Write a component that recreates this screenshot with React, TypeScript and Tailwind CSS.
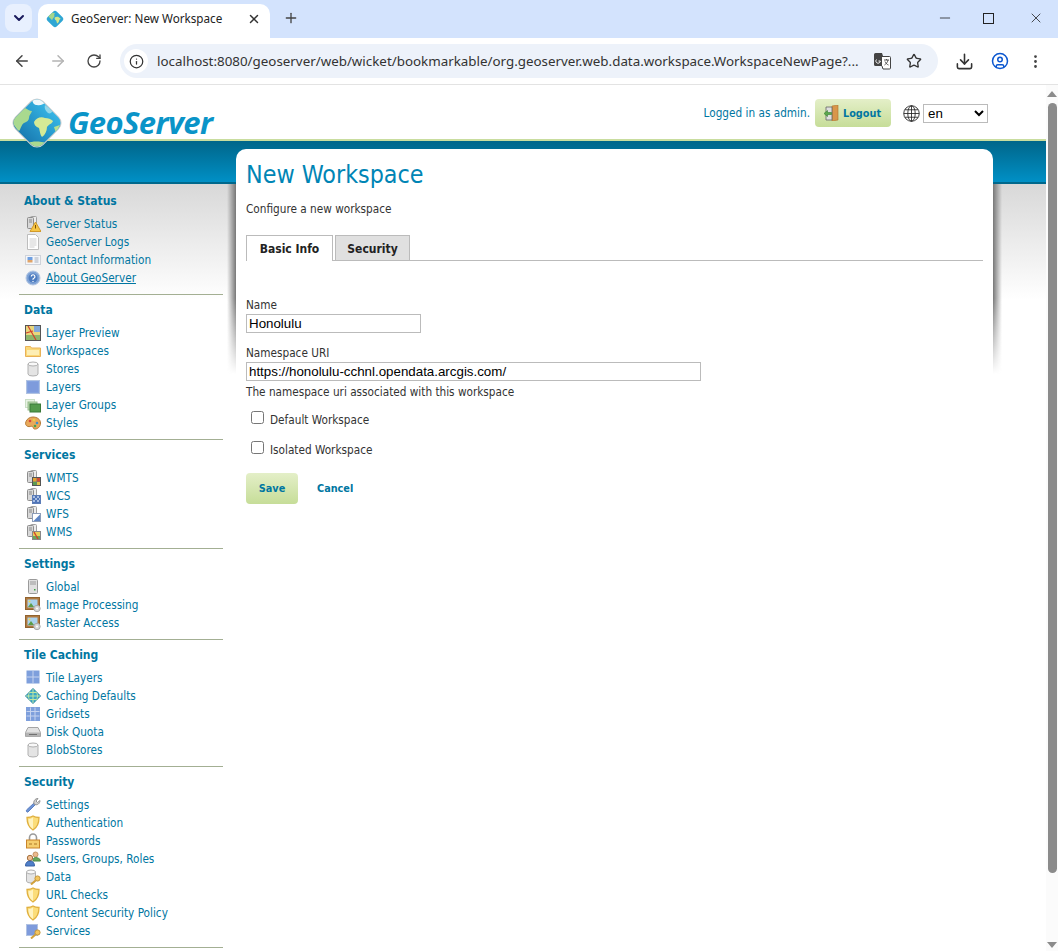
import { ArrowLeft, ArrowRight, ChevronDown, Download, Info, Minus, MoreVertical, Plus, RotateCw, Star, UserCircle, X } from 'lucide-react';

const sections = [
    {
        title: 'About & Status',
        items: [
            ['Server Status', 'status'],
            ['GeoServer Logs', 'doc'],
            ['Contact Information', 'card'],
            ['About GeoServer', 'help'],
        ],
    },
    {
        title: 'Data',
        items: [
            ['Layer Preview', 'preview'],
            ['Workspaces', 'folder'],
            ['Stores', 'db'],
            ['Layers', 'layer'],
            ['Layer Groups', 'groups'],
            ['Styles', 'palette'],
        ],
    },
    {
        title: 'Services',
        items: [
            ['WMTS', 'wmts'],
            ['WCS', 'wcs'],
            ['WFS', 'wfs'],
            ['WMS', 'wms'],
        ],
    },
    {
        title: 'Settings',
        items: [
            ['Global', 'server'],
            ['Image Processing', 'picture'],
            ['Raster Access', 'picture'],
        ],
    },
    {
        title: 'Tile Caching',
        items: [
            ['Tile Layers', 'tiles'],
            ['Caching Defaults', 'globe'],
            ['Gridsets', 'grid'],
            ['Disk Quota', 'disk'],
            ['BlobStores', 'db'],
        ],
    },
    {
        title: 'Security',
        items: [
            ['Settings', 'wrench'],
            ['Authentication', 'shield'],
            ['Passwords', 'lock'],
            ['Users, Groups, Roles', 'users'],
            ['Data', 'dbkey'],
            ['URL Checks', 'shield'],
            ['Content Security Policy', 'shield'],
            ['Services', 'layerkey'],
        ],
    },
];

function ServerBase() {
    return (
        <>
            <rect x="5.5" y="0.5" width="6" height="10" rx="1" fill="#ececec" stroke="#a0a0a0" />
            <rect x="2.5" y="1.5" width="6" height="11" rx="1" fill="#d8d8d8" stroke="#8d8d8d" />
            <path d="M4 4h3M4 6h3" stroke="#888" />
        </>
    );
}

function Key() {
    return (
        <>
            <circle cx="12.5" cy="9.5" r="2.6" fill="#f3c55e" stroke="#c4963a" />
            <path d="M10.5 11.5L6 15.5" stroke="#d3a23a" strokeWidth="2" />
        </>
    );
}

function MenuIcon({ name }: { name: string }) {
    let body = null;
    switch (name) {
        case 'status':
            body = (
                <>
                    <ServerBase />
                    <path d="M10.5 6L16 15.5H5z" fill="#f6c544" stroke="#d19a2a" />
                    <path d="M10.5 9v3.5" stroke="#7a4d00" />
                </>
            );
            break;
        case 'doc':
            body = (
                <>
                    <path d="M2.5.5h8l3 3v12h-11z" fill="#fff" stroke="#bdbdbd" />
                    <path d="M4.5 5h7M4.5 7h7M4.500 9h7M4.500 11h7M4.500 13h5" stroke="#cfcfcf" />
                </>
            );
            break;
        case 'card':
            body = (
                <>
                    <rect x="0.5" y="3.5" width="15" height="9" fill="#f4f6fa" stroke="#cfd3da" />
                    <rect x="2.5" y="5" width="5" height="3" fill="#6f9fe0" />
                    <rect x="2.5" y="8" width="5" height="2.5" fill="#e0a468" />
                    <path d="M9.500 6h4M9.500 8h4M9.500 10h4" stroke="#a7afbc" />
                </>
            );
            break;
        case 'help':
            body = (
                <>
                    <circle cx="8" cy="8" r="7" fill="#7fa3d6" stroke="#b5c8e4" />
                    <circle cx="8" cy="8" r="4.500" fill="#4f7dc0" />
                    <path d="M6.300 6.500a1.800 1.800 0 113 1.400L8 9v.8M8 11v1" stroke="#fff" strokeWidth="1.200" fill="none" />
                </>
            );
            break;
        case 'preview':
            body = (
                <>
                    <rect x="0.500" y="0.500" width="15" height="15" fill="#e8d77c" stroke="#555" />
                    <path d="M1 10h14v5H1z" fill="#8db56c" />
                    <path d="M9 1h6v6H9z" fill="#83a8d8" />
                    <path d="M3 1l8 14M1 8l7-2" stroke="#d2402c" strokeWidth="1.200" />
                </>
            );
            break;
        case 'folder':
            body = (
                <>
                    <path d="M.5 3.500h5l1 1.500h9v8.500H.5z" fill="#fbd878" stroke="#e8b158" />
                    <path d="M2 7h12v5H2z" fill="#fdeeb5" />
                </>
            );
            break;
        case 'db':
            body = (
                <>
                    <path d="M3 3v10a5 2 0 0010 0V3z" fill="#e4e4e4" stroke="#b0b0b0" />
                    <ellipse cx="8" cy="3" rx="5" ry="2" fill="#f8f8f8" stroke="#b0b0b0" />
                </>
            );
            break;
        case 'layer':
            body = (
                <>
                    <rect x="1.500" y="1.500" width="13" height="13" fill="#85a3e0" stroke="#b0c2e2" />
                    <rect x="3" y="3" width="10" height="10" fill="#7e9bdc" />
                </>
            );
            break;
        case 'groups':
            body = (
                <>
                    <rect x="0.500" y="2.500" width="9" height="8" fill="#e8f3e3" stroke="#cbdfc6" />
                    <rect x="3" y="5" width="9" height="8" fill="#b5d4aa" stroke="#98bb8c" />
                    <rect x="5" y="7" width="10.500" height="8" fill="#539a4c" stroke="#3a7a38" />
                </>
            );
            break;
        case 'palette':
            body = (
                <>
                    <path d="M8 2c4 0 7.500 2.400 7.500 6S12.500 14.500 9.500 14c-1.600-.3-1-2-2.200-2.600-1.400-.6-2.600.8-4.600 0C.8 10.600 0 9 1 6.500 2 3.800 4.800 2 8 2z" fill="#e9a95a" stroke="#b57b38" />
                    <circle cx="5" cy="6" r="1.300" fill="#d9453a" />
                    <circle cx="9" cy="5" r="1.300" fill="#e8d04a" />
                    <circle cx="12" cy="8" r="1.300" fill="#3c8fd0" />
                    <circle cx="10" cy="11" r="1.300" fill="#4aa34d" />
                </>
            );
            break;
        case 'wmts':
            body = (
                <>
                    <ServerBase />
                    <rect x="7.500" y="7.500" width="8" height="8" fill="#777" stroke="#555" />
                    <path d="M8 8h3.500v3.500H8z" fill="#e3a431" />
                    <path d="M12 8h3v3.500h-3z" fill="#d14f35" />
                    <path d="M8 12h3.500v3H8z" fill="#5a9d50" />
                    <path d="M12 12h3v3h-3z" fill="#dfc447" />
                </>
            );
            break;
        case 'wcs':
            body = (
                <>
                    <ServerBase />
                    <rect x="7.500" y="7.500" width="8" height="8" fill="#4f74b8" stroke="#5c7db8" />
                    <path d="M8 8h2v2H8zM12 8h2v2h-2zM10 10h2v2h-2zM14 10h1v2h-1zM8 12h2v2H8zM12 12h2v2h-2z" fill="#a7bde2" />
                </>
            );
            break;
        case 'wfs':
            body = (
                <>
                    <ServerBase />
                    <rect x="7.500" y="7.500" width="8" height="8" fill="#fff" stroke="#8d9db8" />
                    <path d="M15 8.500V15H8.500z" fill="#5f86c4" />
                </>
            );
            break;
        case 'wms':
            body = (
                <>
                    <ServerBase />
                    <rect x="7.500" y="7.500" width="8" height="8" fill="#e8cf58" stroke="#888" />
                    <path d="M8 12h7v3H8z" fill="#6ca65a" />
                    <path d="M9 8l4 7" stroke="#d2402c" strokeWidth="1.400" />
                </>
            );
            break;
        case 'server':
            body = (
                <>
                    <rect x="3.500" y="0.500" width="9" height="14" rx="1" fill="#e0e0e0" stroke="#9a9a9a" />
                    <path d="M5 3h6M5 5h6" stroke="#9a9a9a" />
                    <rect x="9" y="10" width="1.500" height="1.500" fill="#38a13f" />
                </>
            );
            break;
        case 'picture':
            body = (
                <>
                    <rect x="0.500" y="0.500" width="14" height="12" fill="#b07a40" stroke="#91632f" />
                    <rect x="2.500" y="2.500" width="10" height="8" fill="#a9d2ee" />
                    <path d="M3 10l3-4 3 4z" fill="#5c9c48" />
                    <circle cx="4.500" cy="4.500" r="1" fill="#f4d94e" />
                    <circle cx="12" cy="11.500" r="3.200" fill="#d6d6d6" stroke="#aaa" />
                    <circle cx="12" cy="11.500" r="1" fill="#fff" />
                </>
            );
            break;
        case 'tiles':
            body = (
                <>
                    <rect x="1.500" y="0.500" width="13" height="13" fill="#7e9fdc" />
                    <path d="M8 0.500v13M1.500 7h13" stroke="#c5d3ef" />
                </>
            );
            break;
        case 'globe':
            body = (
                <>
                    <path d="M8 .5L15.500 8 8 15.500.5 8z" fill="#3aa7c9" stroke="#21809f" strokeLinejoin="round" />
                    <path d="M8 1v14M1 8h14M4.500 4.500h7M4.500 11.500h7" stroke="#bfe6a0" />
                    <path d="M5 3.500c-2 3-2 6 0 9M11 3.500c2 3 2 6 0 9" stroke="#bfe6a0" fill="none" />
                </>
            );
            break;
        case 'grid':
            body = (
                <>
                    <rect x="1.500" y="1.500" width="13" height="13" fill="#7e9fdc" stroke="#7e9fdc" />
                    <path d="M5.500 1.500v13M10 1.500v13M1.500 5.500h13M1.500 10h13" stroke="#c5d3ef" />
                </>
            );
            break;
        case 'disk':
            body = (
                <>
                    <path d="M3 3.500h10l2.500 5v4H.5v-4z" fill="#e2e2e2" stroke="#a5a5a5" />
                    <rect x="1" y="8.500" width="14" height="4" fill="#b4b4b4" />
                    <path d="M4 10.500h8" stroke="#707070" />
                </>
            );
            break;
        case 'wrench':
            body = (
                <>
                    <path d="M1.500 13L9 6l1.500 1.500L3 15c-1.200.6-2-.8-1.500-2z" fill="#6d93d4" stroke="#5c80c2" />
                    <path d="M9 7c-.8-2.600.8-5.500 4-5.500l-2 2.500 1.500 1.500L15 3.500c0 3-2.600 5-5 4z" fill="#d0d0d0" stroke="#949494" />
                </>
            );
            break;
        case 'shield':
            body = (
                <>
                    <path d="M8 1c1.500 1 3.500 1.500 6 1.500 0 5.500-1 9.500-6 12.500-5-3-6-7-6-12.500C4.500 2.500 6.500 2 8 1z" fill="#fbdd7a" stroke="#e0b040" strokeWidth="1.300" />
                    <path d="M8 2.500V14C4.500 11.500 3.500 8.500 3.500 4 5.500 4 7 3.300 8 2.500z" fill="#fff3c0" />
                </>
            );
            break;
        case 'lock':
            body = (
                <>
                    <path d="M4.500 7V4.500a3.500 3.500 0 017 0V7" fill="none" stroke="#9a9a9a" strokeWidth="1.600" />
                    <rect x="1.500" y="7" width="13" height="8" fill="#f5cd6e" stroke="#c9842a" />
                    <path d="M4 10h3v2H4zM9 10h3v2H9z" fill="#d0a24a" />
                </>
            );
            break;
        case 'users':
            body = (
                <>
                    <circle cx="10.500" cy="3.500" r="2.500" fill="#ecb98d" stroke="#c49463" />
                    <path d="M8 10c0-2.500 1-3.500 2.500-3.500S15.500 7.500 15.500 10z" fill="#6aa85a" stroke="#4f8a45" />
                    <circle cx="5" cy="7" r="2.700" fill="#f0bf94" stroke="#a5713f" />
                    <path d="M.5 15c0-3.500 2-5 4.500-5s4.500 1.500 4.500 5z" fill="#4f7fc9" stroke="#3a62a5" />
                </>
            );
            break;
        case 'dbkey':
            body = (
                <>
                    <path d="M1.500 3v9a4.500 2 0 009 0V3z" fill="#e4e4e4" stroke="#b0b0b0" />
                    <ellipse cx="6" cy="3" rx="4.500" ry="2" fill="#f8f8f8" stroke="#b0b0b0" />
                    <Key />
                </>
            );
            break;
        default:
            body = (
                <>
                    <rect x="1.500" y="1.500" width="11" height="11" fill="#7e9bdc" stroke="#b0c2e2" />
                    <Key />
                </>
            );
    }
    return (
        <svg viewBox="0 0 16 16" className="h-4 w-4 shrink-0">
            {body}
        </svg>
    );
}

function LogoMark() {
    return (
        <svg viewBox="0 0 50 52" className="absolute left-[12px] top-[12px] h-[52px] w-[50px]">
            <defs>
                <linearGradient id="sea" x1="0" y1="0" x2="0" y2="1">
                    <stop offset="0" stopColor="#35b4e4" />
                    <stop offset="1" stopColor="#1a7db3" />
                </linearGradient>
                <clipPath id="diamond">
                    <rect x="6" y="7" width="38" height="38" rx="8" transform="rotate(45 25 26)" />
                </clipPath>
            </defs>
            <rect x="5" y="6" width="40" height="40" rx="9" transform="rotate(45 25 26)" fill="#cfcfcf" />
            <rect x="6" y="7" width="38" height="38" rx="8" transform="rotate(45 25 26)" fill="url(#sea)" />
            <g clipPath="url(#diamond)">
                <path d="M20 0h12l2 5c-2 2-6 4-9 3-3 0-5-2-5-8z" fill="#eef8fb" />
                <path d="M0 24c3-6 8-11 13-13 3 1 4 3 7 3-1 3-3 4-3 7 0 2-2 4-5 5-3 2-3 6-5 8-3-2-5-6-7-10z" fill="#a9d98f" />
                <path d="M22 25c2-4 7-6 11-4 3 0 6 1 8 3-1 3-4 3-6 6 0 4-2 8-5 10-2-2-2-6-3-9-3-1-5-3-5-6z" fill="#d5ea96" />
                <path d="M33 8l8 6c-2 2-3 3-5 2-2-2-4-4-3-8z" fill="#8fd6ea" />
                <path d="M42 30l6-2-4 8z" fill="#b9e08f" />
                <path d="M16 46c4-2 12-2 18 0l-9 6z" fill="#a9d98f" />
            </g>
        </svg>
    );
}

function Shadow({ side }: { side: 'left' | 'right' }) {
    return (
        <div
            className={
                side === 'left'
                    ? 'absolute -left-[9px] top-[35px] h-[190px] w-[9px] bg-gradient-to-l from-[#777] to-transparent [mask-image:linear-gradient(#000_60%,transparent)]'
                    : 'absolute -right-[9px] top-[35px] h-[190px] w-[9px] bg-gradient-to-r from-[#777] to-transparent [mask-image:linear-gradient(#000_60%,transparent)]'
            }
        />
    );
}

export default function App() {
    return (
        <div className="flex h-[951px] w-[1058px] flex-col overflow-hidden bg-white font-['DejaVu_Sans_Condensed','Liberation_Sans',sans-serif] text-[11.7px] text-[#333]">
            {/* browser tab strip */}
            <div className="flex h-[38px] shrink-0 items-end bg-[#d3e3fd] font-['Noto_Sans',sans-serif]">
                <div className="mb-[6px] ml-[5px] flex h-[28px] w-[27px] items-center justify-center rounded-lg bg-[#e8f0fe] text-[#1a1a5c]">
                    <ChevronDown size={16} strokeWidth={3} />
                </div>
                <div className="ml-[6px] flex h-[34px] w-[232px] items-center rounded-t-[10px] bg-white pb-[4px] pl-[8px] pr-[9px]">
                    <svg viewBox="0 0 50 52" className="h-[18px] w-[18px]">
                        <rect x="6" y="7" width="38" height="38" rx="8" transform="rotate(45 25 26)" fill="#2fa6d4" />
                        <path d="M6 19c3-5 8-9 13-12 2 2 4 3 6 2-1 3-3 4-2 7 1 2 0 5-3 7-2 2-2 5-4 6-3-3-7-6-10-10z" fill="#a5d58b" />
                        <path d="M24 22c4-3 9-3 12-1 2 2 5 2 5 4-2 2-4 3-4 6s-3 6-5 8c-2-2-3-5-3-8-2-2-4-3-5-6z" fill="#cfe68c" />
                    </svg>
                    <span className="ml-[7px] flex-1 text-[11.7px] text-[#222]">GeoServer: New Workspace</span>
                    <X size={14} strokeWidth={2.5} className="text-[#333]" />
                </div>
                <div className="mb-[12px] ml-[13px] text-[#444]">
                    <Plus size={16} strokeWidth={2} />
                </div>
                <div className="mb-[12px] ml-auto flex items-center text-[#222]">
                    <Minus size={16} strokeWidth={1.2} className="mr-[30px]" />
                    <div className="mr-[34px] h-[11px] w-[11px] border border-[#222]" />
                    <X size={16} strokeWidth={1.2} className="mr-[14px]" />
                </div>
            </div>

            {/* browser toolbar */}
            <div className="flex h-[47px] shrink-0 items-center border-b border-[#e3e3e3] font-['Noto_Sans',sans-serif]">
                <ArrowLeft size={18} className="ml-[13px] text-[#444]" />
                <ArrowRight size={18} className="ml-[18px] text-[#b4b4b4]" />
                <RotateCw size={16} className="ml-[19px] text-[#444]" />
                <div className="ml-[18px] flex h-[34px] w-[818px] items-center rounded-full bg-[#edf2fa] pl-[4px] pr-[16px]">
                    <div className="flex h-[24px] w-[24px] items-center justify-center rounded-full bg-white">
                        <Info size={15} className="text-[#333]" />
                    </div>
                    <span className="ml-[9px] flex-1 whitespace-nowrap text-[13.37px] text-[#333]">
                        localhost:8080/geoserver/web/wicket/bookmarkable/org.geoserver.web.data.workspace.WorkspaceNewPage?...
                    </span>
                    <svg viewBox="0 0 18 18" className="h-[18px] w-[18px]">
                        <path d="M1 2.500A1.500 1.500 0 012.500 1H9l1 3v10H2.500A1.500 1.500 0 011 12.500z" fill="#444" />
                        <path d="M9 4.500h7.500a1 1 0 011 1V16a1 1 0 01-1 1H10l-1-3" fill="#fff" stroke="#444" />
                        <path d="M3.500 7.500a2.200 2.200 0 103.800 1.500H5.500" fill="none" stroke="#fff" />
                        <path d="M11 8h5M13.500 7v1M15 8c-.5 2.500-2 4-3.500 5M12 9.500c.7 1.500 2 3 3.500 3.500" fill="none" stroke="#444" strokeWidth="0.900" />
                    </svg>
                    <Star size={16} className="ml-[15px] text-[#333]" />
                </div>
                <Download size={19} className="ml-[17px] text-[#333]" />
                <UserCircle size={18} className="ml-[17px] text-[#0b57d0]" />
                <MoreVertical size={17} className="ml-[18px] text-[#444]" />
            </div>

            <div className="flex min-h-0 flex-1">
                {/* page */}
                <div className="relative flex w-[1046px] shrink-0 flex-col">
                    <div className="flex h-[54px] shrink-0 justify-end pr-[58px]">
                        <div className="mt-[14px] flex h-[28px] items-center">
                            <span className="pt-[2px] text-[#0076a1]">Logged in as admin.</span>
                            <a className="ml-[5px] flex h-[28px] w-[76px] items-center rounded-[4px] bg-gradient-to-b from-[#e4efc8] to-[#c6dd98] pl-[8px] text-[10.8px] font-bold text-[#0076a1]">
                                <svg viewBox="0 0 16 16" className="h-4 w-4 shrink-0">
                                    <path d="M9 1l6-1v15l-6 1z" fill="#d9964a" stroke="#b0702c" strokeWidth="0.600" />
                                    <path d="M3 2h6v13H3z" fill="#dedede" stroke="#666" strokeWidth="0.800" />
                                    <path d="M1 8.500l3.500-3v2h4v2h-4v2z" fill="#5ba84c" stroke="#35802f" strokeWidth="0.600" />
                                </svg>
                                <span className="ml-[4px] pt-[2px]">Logout</span>
                            </a>
                            <svg viewBox="0 0 16 16" fill="none" stroke="#222" strokeWidth="0.800" className="ml-[12px] h-[17px] w-[17px]">
                                <circle cx="8" cy="8" r="7.300" />
                                <ellipse cx="8" cy="8" rx="3.500" ry="7.300" />
                                <path d="M8 .7v14.600M.7 8h14.600M1.700 4.500h12.600M1.700 11.500h12.600" />
                            </svg>
                            <select className="ml-[3px] h-[19px] w-[65px] border border-[#bbb] bg-white font-['Liberation_Sans',sans-serif] text-[13.330px] text-black">
                                <option>en</option>
                            </select>
                        </div>
                    </div>
                    <div className="h-[2px] shrink-0 bg-[#c9dd9f]" />
                    <div className="h-[43px] shrink-0 border-b-2 border-[#00688c] bg-gradient-to-b from-[#00668a] to-[#0090c6]" />

                    <LogoMark />
                    <span className="absolute left-[68px] top-[15px] font-['Open_Sans',sans-serif] text-[31px] font-bold italic leading-[44px] tracking-[-0.6px] text-[#0a94c8]">
                        GeoServer
                    </span>

                    <div className="flex min-h-0 flex-1 bg-[linear-gradient(#d8d8d8,#fff_116px)]">
                        <nav className="w-[236px] shrink-0 pl-[19px] pr-[13px] pt-[8px]">
                            {sections.map((section) => (
                                <div key={section.title} className="mb-[6px] border-b border-[#a3af93] pb-[7px]">
                                    <h3 className="pl-[5px] text-[12px] font-bold leading-[18px] text-[#0076a1]">{section.title}</h3>
                                    <ul className="mt-[5px]">
                                        {section.items.map(([label, icon]) => (
                                            <li key={label} className="flex h-[18px] items-center gap-[5px] pl-[6px] text-[#0076a1]">
                                                <MenuIcon name={icon} />
                                                <a className={label === 'About GeoServer' ? 'mt-[2px] underline' : 'mt-[2px]'}>{label}</a>
                                            </li>
                                        ))}
                                    </ul>
                                </div>
                            ))}
                        </nav>

                        <main className="relative z-10 -mt-[35px] h-[600px] w-[757px] shrink-0 rounded-t-[10px] bg-white px-[10px] pt-[10px]">
                            <Shadow side="left" />
                            <Shadow side="right" />
                            <h1 className="text-[24.8px] font-normal leading-[32px] text-[#0085b5]">New Workspace</h1>
                            <p className="mt-[10px] leading-[16px]">Configure a new workspace</p>

                            <div className="mt-[18px] flex h-[26px] items-end border-b border-[#bbb]">
                                <div className="-mb-px flex h-[26px] w-[87px] items-center justify-center border border-b-0 border-[#bbb] bg-white pt-[1px] text-[12px] font-bold text-[#222]">
                                    Basic Info
                                </div>
                                <div className="ml-[2px] flex h-[25px] w-[75px] items-center justify-center border border-b-0 border-[#bbb] bg-[#e0e0e0] pt-[1px] text-[12px] font-bold text-[#222]">
                                    Security
                                </div>
                            </div>

                            <label className="mt-[36px] block leading-[16px]">Name</label>
                            <input
                                readOnly
                                value="Honolulu"
                                className="mt-[1px] block h-[19px] w-[175px] border border-[#bbb] px-[2px] font-['Liberation_Sans',sans-serif] text-[13.330px] text-black"
                            />
                            <label className="mt-[12px] block leading-[16px]">Namespace URI</label>
                            <input
                                readOnly
                                value="https://honolulu-cchnl.opendata.arcgis.com/"
                                className="mt-[1px] block h-[19px] w-[455px] border border-[#bbb] px-[2px] font-['Liberation_Sans',sans-serif] text-[13.330px] text-black"
                            />
                            <p className="mt-[3px] leading-[16px]">The namespace uri associated with this workspace</p>

                            <label className="mt-[12px] flex h-[16px] items-center pl-[5px]">
                                <input type="checkbox" className="mb-[5px] h-[13px] w-[13px]" />
                                <span className="ml-[6px] pt-[2px]">Default Workspace</span>
                            </label>
                            <label className="mt-[14px] flex h-[16px] items-center pl-[5px]">
                                <input type="checkbox" className="mb-[5px] h-[13px] w-[13px]" />
                                <span className="ml-[6px] pt-[2px]">Isolated Workspace</span>
                            </label>

                            <div className="mt-[15px] flex items-center">
                                <button className="h-[31px] w-[52px] rounded-[4px] bg-gradient-to-b from-[#e4efc8] to-[#c6dd98] pt-[2px] text-[10.8px] font-bold text-[#0076a1]">
                                    Save
                                </button>
                                <a className="ml-[19px] pt-[2px] text-[10.8px] font-bold text-[#0076a1]">Cancel</a>
                            </div>
                        </main>
                    </div>
                </div>

                {/* page scrollbar */}
                <div className="flex w-[12px] shrink-0 flex-col items-center bg-[#fbfbfb] pt-[6px]">
                    <div className="h-0 w-0 border-x-[5px] border-b-[6px] border-x-transparent border-b-[#8b8b8b]" />
                    <div className="mt-[6px] h-[770px] w-[9px] rounded-full bg-[#8b8b8b]" />
                    <div className="mt-auto mb-[3px] h-0 w-0 border-x-[5px] border-t-[6px] border-x-transparent border-t-[#8b8b8b]" />
                </div>
            </div>
        </div>
    );
}
